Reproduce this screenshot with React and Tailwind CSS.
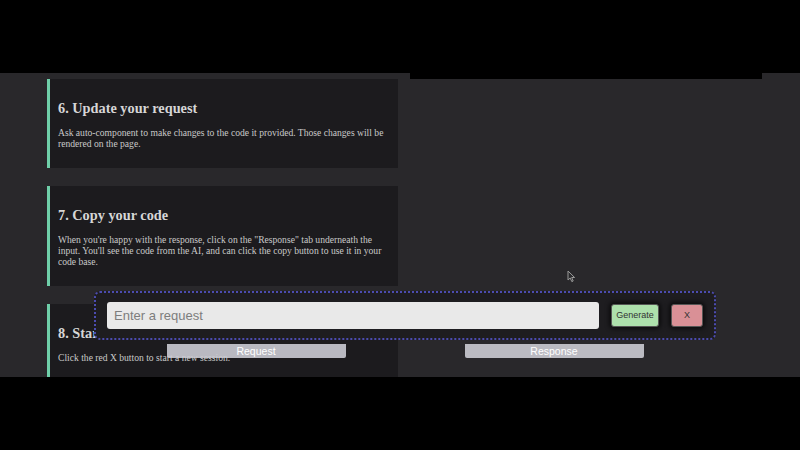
import React from 'react';

const steps = [
  {
    title: '6. Update your request',
    body: 'Ask auto-component to make changes to the code it provided. Those changes will be rendered on the page.',
  },
  {
    title: '7. Copy your code',
    body: 'When you\'re happy with the response, click on the "Response" tab underneath the input. You\'ll see the code from the AI, and can click the copy button to use it in your code base.',
  },
  {
    title: '8. Start a new session',
    body: 'Click the red X button to start a new session.',
  },
];

const StepCard = ({ title, body }) => (
  <div className="bg-[#1c1b1e] border-l-[3px] border-[#6fcfa9] pl-[8px] pr-[8px] pt-[20px] pb-[19px]">
    <h3 className="text-[14.3px] leading-[18px] font-bold text-[#d6d6d6] mb-[10px]">{title}</h3>
    <p className="text-[9.6px] leading-[11px] text-[#c9c9c9]">{body}</p>
  </div>
);

export default function App() {
  return (
    <div className="w-[800px] h-[450px] bg-black flex flex-col overflow-hidden" style={{ fontFamily: '"Liberation Serif", serif' }}>
      <div className="h-[73px] shrink-0 bg-black" />
      <div className="relative h-[304px] shrink-0 bg-[#29282b] overflow-hidden">
        <div className="flex pl-[47px] gap-[12px]">
          <div className="w-[351px] flex flex-col gap-[18px] pt-[6px]">
            {steps.map((s) => (
              <StepCard key={s.title} {...s} />
            ))}
          </div>
          <div className="w-[352px]">
            <div className="h-[6px] bg-black" />
          </div>
        </div>

        {/* mouse cursor */}
        <svg className="absolute left-[567px] top-[197px]" width="9" height="13" viewBox="0 0 9 13">
          <path d="M1 1 L1 10 L3.2 8 L4.8 11.6 L6.2 11 L4.7 7.5 L7.6 7.5 Z" fill="#2a2a2c" stroke="#9a9a9a" strokeWidth="1" strokeLinejoin="round" />
        </svg>

        {/* floating request panel */}
        <div className="absolute left-[94px] top-[218px] w-[622px]" style={{ fontFamily: '"Liberation Sans", Arial, sans-serif' }}>
          <div className="h-[49px] rounded-[6px] border-2 border-dotted border-[#4c4cb0] bg-[#1e1d20] flex items-center pl-[11px] pr-[11px]">
            <div className="w-[492px] h-[27px] rounded-[3px] bg-[#e9e9e9] flex items-center px-[7px]">
              <span className="text-[13px] text-[#7d7d7d]">Enter a request</span>
            </div>
            <button className="ml-[12px] w-[48px] h-[23px] rounded-[3px] bg-[#ade0ac] text-[9px] text-[#333] shadow-[0_0_4px_2px_rgba(0,0,0,0.6)] border border-[#555]">
              Generate
            </button>
            <button className="ml-[12px] w-[32px] h-[23px] rounded-[3px] bg-[#d99096] text-[9px] text-[#333] shadow-[0_0_4px_2px_rgba(0,0,0,0.6)] border border-[#555]">
              X
            </button>
          </div>
          <div className="flex justify-center gap-[119px] mt-[4px]">
            <div className="w-[179px] h-[14px] rounded-b-[2px] bg-[#cbcbd3]/90 text-white text-[10.5px] leading-[14px] text-center">Request</div>
            <div className="w-[179px] h-[14px] rounded-b-[2px] bg-[#cbcbd3]/90 text-white text-[10.5px] leading-[14px] text-center">Response</div>
          </div>
        </div>
      </div>
      <div className="flex-1 bg-black" />
    </div>
  );
}
